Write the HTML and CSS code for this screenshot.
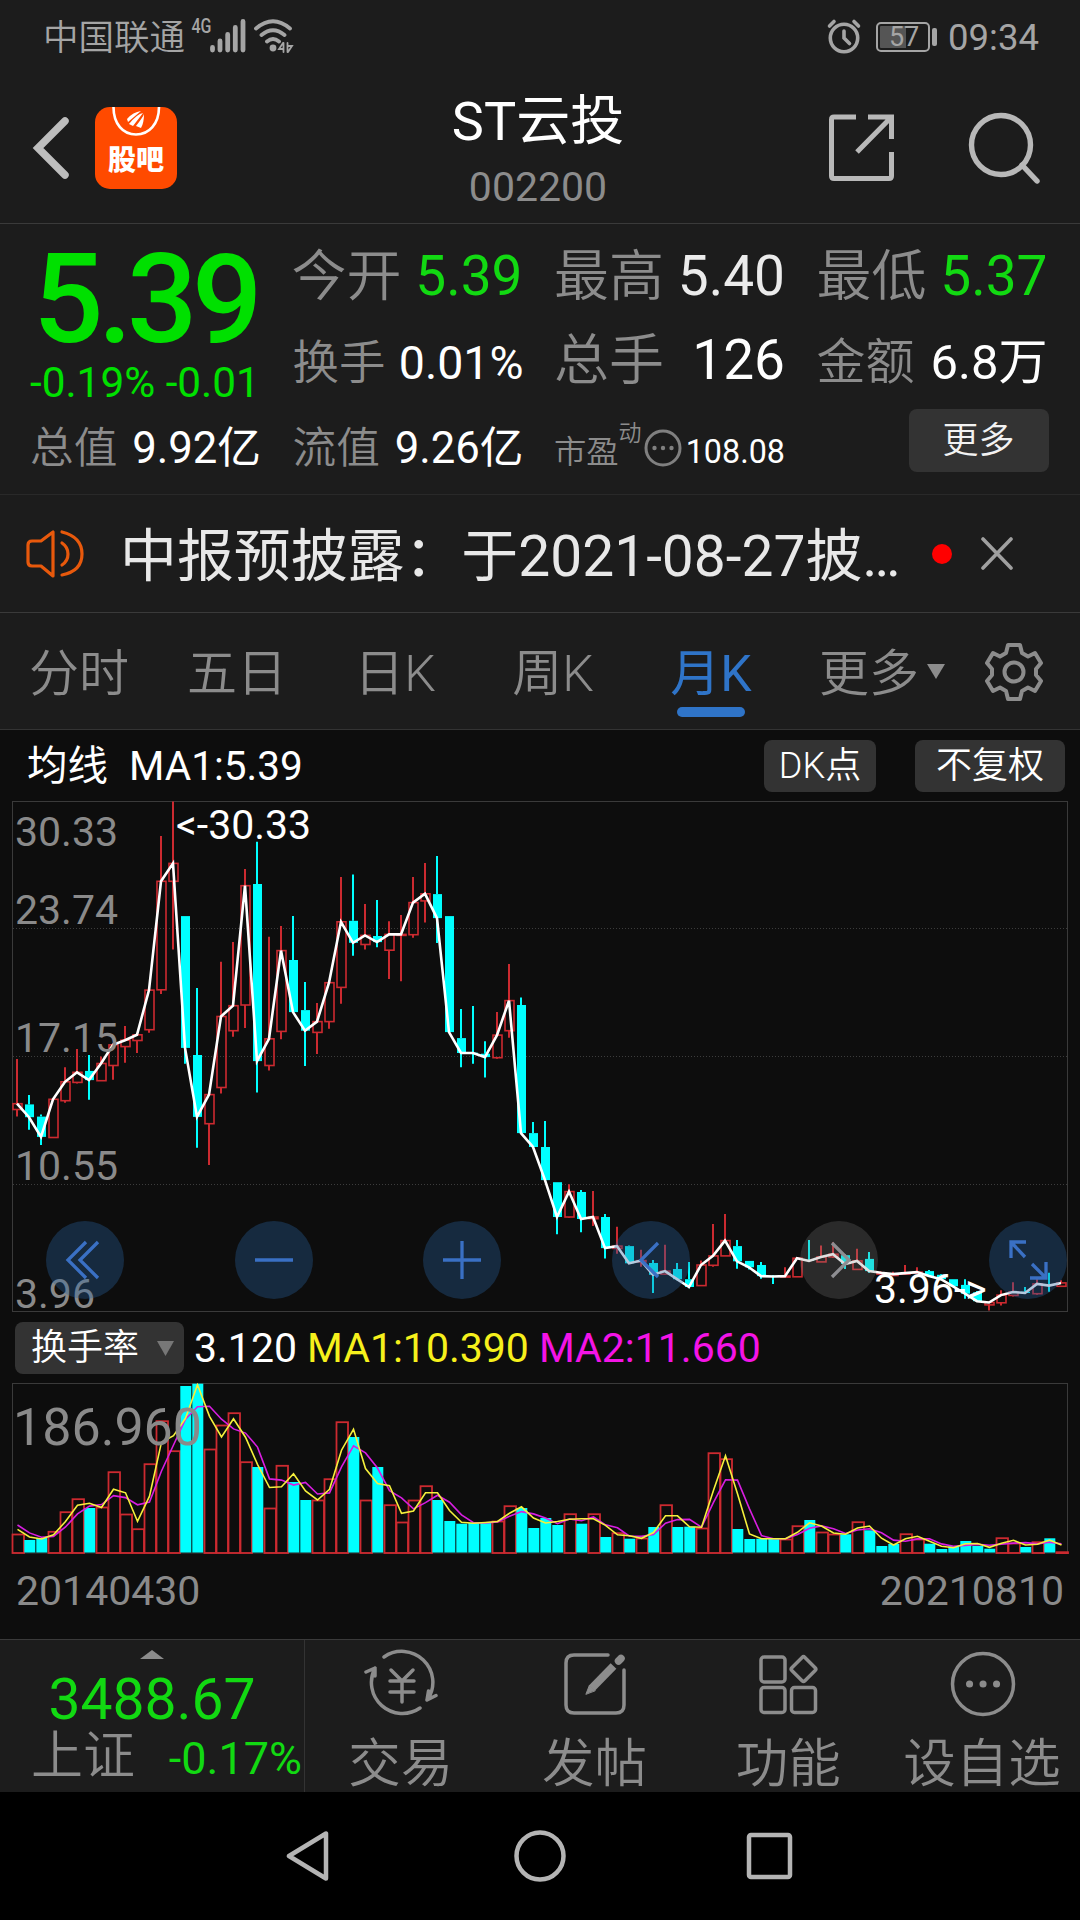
FILE: index.html
```html
<!DOCTYPE html>
<html lang="zh-CN">
<head>
    <meta charset="UTF-8">
    <meta name="viewport" content="width=device-width, initial-scale=1.0">
    <title>ST云投 002200</title>
    <link rel="stylesheet" href="styles.css">
</head>
<body>
    <div class="status-bar">
        <span class="carrier">中国联通</span>
        <span class="net">4G</span>
        <svg class="signal" width="36" height="34" viewBox="0 0 36 34" stroke="#a5a5a5" stroke-width="4.8" stroke-linecap="round">
            <path d="M2.5 28.500V31M10 22V31M17.700 15.500V31M25.300 8.500V31M33 2.500V31"/>
        </svg>
        <svg class="wifi" width="42" height="36" viewBox="0 0 42 36" fill="none" stroke="#a5a5a5" stroke-width="3.800" stroke-linecap="round">
            <path d="M3 10.500Q20 -4 37 10.500M8.500 17Q20 7.500 31.500 17M14 23.500Q20 18.500 26 23.500"/>
            <circle cx="20" cy="30" r="3.400" fill="#a5a5a5" stroke="none"/>
            <path d="M30.500 25V34M30 25L26 31H30M34.500 34V25M35 34L39 28H35" stroke-width="1.800"/>
        </svg>
        <svg class="alarm" width="36" height="36" viewBox="0 0 36 36" fill="none" stroke="#a5a5a5" stroke-width="3.600" stroke-linecap="round">
            <circle cx="18" cy="20" r="13.700"/>
            <path d="M18 13V20L23.500 25.500M3.500 8L8 3.500M28 3.500L32.500 8"/>
        </svg>
        <div class="battery"><span>57</span></div>
        <span class="clock">09:34</span>
    </div>

    <div class="header">
        <svg class="back" width="40" height="66" viewBox="0 0 40 66" fill="none" stroke="#bdbdbd" stroke-width="7.500" stroke-linecap="round">
            <path d="M34 6L7 33L34 60"/>
        </svg>
        <div class="guba">
            <svg width="82" height="34" viewBox="0 0 82 34" fill="none" stroke="#fff" stroke-width="2.600">
                <path d="M18.500 0C18.500 17 28 27.500 41 27.500S64 17 64 0"/>
                <path d="M32 12Q38 5 46 4L33 15ZM34 17Q42 7 48 6L38 19ZM41 19Q48 10 49 7Q49 16 46 21Z" fill="#fff" stroke="none"/>
            </svg>
            <span>股吧</span>
        </div>
        <div class="title">
            <h1>ST云投</h1>
            <p>002200</p>
        </div>
        <svg class="share" width="68" height="70" viewBox="0 0 68 70" fill="none" stroke="#b8b8b8" stroke-width="5">
            <path d="M28 4H6Q3.500 4 3.500 6.500V63Q3.500 65.500 6 65.500H61Q63.500 65.500 63.500 63V39"/>
            <path d="M40 4H63.500V26M63 4.500L29 39"/>
        </svg>
        <svg class="search" width="74" height="74" viewBox="0 0 74 74" fill="none" stroke="#b8b8b8" stroke-width="5.400" stroke-linecap="round">
            <circle cx="33" cy="33" r="29.500"/>
            <path d="M54 53L69 69"/>
        </svg>
    </div>

    <div class="quote">
        <div class="price">
            <div class="now">5.39</div>
            <div class="change">-0.19% -0.01</div>
        </div>
        <div class="stat s54"><span>今开</span><b class="green">5.39</b></div>
        <div class="stat s54"><span>最高</span><b class="soft">5.40</b></div>
        <div class="stat s54"><span>最低</span><b class="green">5.37</b></div>
        <div class="stat s46"><span>换手</span><b>0.01%</b></div>
        <div class="stat s54"><span>总手</span><b>126</b></div>
        <div class="stat s48"><span>金额</span><b>6.8万</b></div>
        <div class="stat s43"><span>总值</span><b>9.92亿</b></div>
        <div class="stat s43"><span>流值</span><b>9.26亿</b></div>
        <div class="stat s32">
            <span>市盈</span><i>动</i>
            <svg width="38" height="38" viewBox="0 0 38 38" fill="#808080">
                <circle cx="19" cy="19" r="17" fill="none" stroke="#808080" stroke-width="3"/>
                <circle cx="10.500" cy="19" r="2.200"/><circle cx="19" cy="19" r="2.200"/><circle cx="27.500" cy="19" r="2.200"/>
            </svg>
            <b>108.08</b>
        </div>
        <button class="more">更多</button>
    </div>

    <div class="news">
        <svg width="60" height="50" viewBox="0 0 60 50" fill="none" stroke="#e8590c" stroke-width="3.200" stroke-linejoin="round" stroke-linecap="round">
            <path d="M27 3V47L15 37H6Q2 37 2 33V16Q2 12 6 12H15Z"/>
            <path d="M36 14Q42 18 42 25T36 36M36 3Q56 8 56 25T36 46"/>
        </svg>
        <span class="news-text">中报预披露：于2021-08-27披…</span>
        <span class="dot"></span>
        <svg width="34" height="34" viewBox="0 0 34 34" stroke="#a0a0a0" stroke-width="3.600" stroke-linecap="round">
            <path d="M3 2L31 31M31 2L3 31"/>
        </svg>
    </div>

    <div class="tabs">
        <a>分时</a>
        <a>五日</a>
        <a>日K</a>
        <a>周K</a>
        <a class="active">月K</a>
        <a class="tab-more">更多<svg width="18" height="15" viewBox="0 0 18 15"><path d="M0 0H18L9 15Z" fill="#8c8c8c"/></svg></a>
        <svg class="gear" width="60" height="60" viewBox="0 0 60 60" fill="none" stroke="#8c8c8c" stroke-width="4" stroke-linejoin="round">
            <path d="M24 3H36L38 11L44 14.500L51 11L57 21L52 27V33L57 39L51 49L44 45.500L38 49L36 57H24L22 49L16 45.500L9 49L3 39L8 33V27L3 21L9 11L16 14.500L22 11Z"/>
            <circle cx="30" cy="30" r="9.500"/>
        </svg>
    </div>

    <div class="chart-head">
        <span class="ma">均线</span>
        <span class="ma-value">MA1:5.39</span>
        <button>DK点</button>
        <button class="adjust">不复权</button>
    </div>

    <div class="k-chart">
        <svg id="kline" width="1080" height="511"></svg>
        <span class="axis a1">30.33</span>
        <span class="axis a2">23.74</span>
        <span class="axis a3">17.15</span>
        <span class="axis a4">10.55</span>
        <span class="axis a5">3.96</span>
        <span class="axis high">&lt;-30.33</span>
        <span class="axis low">3.96-&gt;</span>
        <div class="tools">
            <div class="tool"><svg width="78" height="78"><path d="M40 21L22 39L40 57M52 21L34 39L52 57"/></svg></div>
            <div class="tool"><svg width="78" height="78"><path d="M20 39H58"/></svg></div>
            <div class="tool"><svg width="78" height="78"><path d="M20 39H58M39 20V58"/></svg></div>
            <div class="tool"><svg width="78" height="78"><path d="M46 22L29 39L46 56"/></svg></div>
            <div class="tool gray"><svg width="78" height="78"><path d="M32 22L49 39L32 56"/></svg></div>
            <div class="tool"><svg width="78" height="78"><path d="M37 21H22V37M22 21L36 36M57 41V57H41M57 57L43 43"/></svg></div>
        </div>
    </div>

    <div class="vol-head">
        <button>换手率<svg width="17" height="15" viewBox="0 0 17 15"><path d="M0 0H17L8.500 15Z" fill="#777"/></svg></button>
        <span>3.120</span>
        <span class="yellow">MA1:10.390</span>
        <span class="pink">MA2:11.660</span>
    </div>
    <div class="vol-chart">
        <svg id="volume" width="1080" height="171"></svg>
        <span class="vol-max">186.960</span>
    </div>
    <div class="dates">
        <span>20140430</span>
        <span>20210810</span>
    </div>

    <div class="bottom">
        <div class="index">
            <svg width="24" height="9" viewBox="0 0 24 9"><path d="M0 9L12 0L24 9Z" fill="#8c8c8c"/></svg>
            <div class="index-value">3488.67</div>
            <div class="index-row"><span>上证</span><b>-0.17%</b></div>
        </div>
        <div class="item">
            <svg width="76" height="70" viewBox="0 0 76 70">
                <path d="M20 8A31 31 0 0 1 64 50L63 51L72 46.500M63 51L64.500 42M56 59A31 31 0 0 1 11 19L2 23M11 19V27"/>
                <path d="M27 21L38 32L49 21M26 32H50M26 43H50M38 32V53"/>
            </svg>
            <span>交易</span>
        </div>
        <div class="item">
            <svg width="70" height="70" viewBox="0 0 70 70">
                <path d="M47 6H13Q5 6 5 14V56Q5 64 13 64H55Q63 64 63 56V21"/>
                <path d="M31 39L52.500 17" stroke-width="8" stroke-linecap="butt"/>
                <path d="M25 45L28.500 36L34 41.500Z" fill="#8c8c8c" stroke-width="1"/>
                <path d="M57.500 12L60 9.500" stroke-width="7.500"/>
            </svg>
            <span>发帖</span>
        </div>
        <div class="item">
            <svg width="70" height="70" viewBox="0 0 70 70">
                <rect x="7" y="8" width="24" height="25" rx="3"/>
                <rect x="7" y="38.500" width="24" height="25" rx="3"/>
                <rect x="37.500" y="38.500" width="24" height="25" rx="3"/>
                <rect x="40.300" y="10.800" width="18.500" height="18.500" rx="2" transform="rotate(45 49.500 20)"/>
            </svg>
            <span>功能</span>
        </div>
        <div class="item">
            <svg width="70" height="70" viewBox="0 0 70 70">
                <circle cx="35" cy="35" r="30.500"/>
                <path d="M21.500 35H21.600M35 35H35.100M48.500 35H48.600" stroke-width="7"/>
            </svg>
            <span>设自选</span>
        </div>
    </div>

    <div class="nav-bar">
        <svg width="46" height="54" viewBox="0 0 46 54"><path d="M40 4.500V49.500L3 27Z"/></svg>
        <svg width="54" height="54" viewBox="0 0 54 54"><circle cx="28" cy="27" r="23.500"/></svg>
        <svg width="48" height="48" viewBox="0 0 48 48"><rect x="3" y="3" width="41" height="42" rx="2"/></svg>
    </div>

    <script src="chart.js"></script>
</body>
</html>
```
FILE: styles.css
```css
* {
    box-sizing: border-box;
}
body {
    margin: 0;
    width: 1080px;
    height: 1920px;
    overflow: hidden;
    background: #1c1c1c;
    color: #fff;
    font-family: Roboto, "Noto Sans CJK SC", sans-serif;
}
svg {
    display: block;
    flex: none;
}
b, i {
    font-weight: 400;
    font-style: normal;
}
button {
    border: none;
    padding: 0;
    border-radius: 8px;
    background: #333;
    color: #f2f2f2;
    font: 350 36px/52px Roboto, "Noto Sans CJK SC", sans-serif;
}
/* status bar */
.status-bar {
    height: 72px;
    display: flex;
    align-items: center;
    padding: 0 41px 0 43px;
    color: #a5a5a5;
}
.carrier {
    font-size: 35.500px;
    font-weight: 350;
    line-height: 72px;
    padding-top: 3px;
}
.net {
    font-size: 20px;
    font-weight: 500;
    line-height: 20px;
    margin: -20px -4px 0 4px;
    transform: scaleX(0.800);
}
.wifi {
    margin-left: 7px;
}
.alarm {
    margin-left: auto;
}
.battery {
    position: relative;
    width: 54px;
    height: 30px;
    margin: 2px 18px 0 14px;
    border: 2px solid #a5a5a5;
    border-radius: 5px;
    background: linear-gradient(90deg, #555 57%, #1c1c1c 57%);
    background-clip: content-box;
    padding: 2px;
}
.battery span {
    display: block;
    text-align: center;
    font-size: 27px;
    line-height: 23px;
    margin-left: 2px;
}
.battery::after {
    content: "";
    position: absolute;
    right: -9px;
    top: 4px;
    width: 5px;
    height: 18px;
    border-radius: 2px;
    background: #a5a5a5;
}
.clock {
    font-size: 36.500px;
    padding-top: 3px;
}
/* header */
.header {
    height: 152px;
    display: flex;
    align-items: flex-start;
    padding: 0 38px 0 31px;
    border-bottom: 1px solid #3a3a3a;
}
.back {
    margin-top: 43px;
}
.guba {
    width: 82px;
    height: 82px;
    margin: 35px 0 0 24px;
    border-radius: 15px;
    background: #ff4a00;
    text-align: center;
}
.guba span {
    display: block;
    font-size: 28px;
    font-weight: 900;
    line-height: 40px;
}
.title {
    flex: 1;
    margin-left: 71px;
    text-align: center;
}
.title h1 {
    margin: 12px 0 0;
    font-size: 54px;
    font-weight: 400;
    line-height: 76px;
}
.title p {
    margin: 0;
    font-size: 41px;
    line-height: 54px;
    color: #8c8c8c;
}
.share {
    margin: 41px 72px 0 0;
}
.search {
    margin-top: 40px;
}
/* quote */
.quote {
    height: 271px;
    display: grid;
    grid-template-columns: repeat(4, 230px);
    grid-template-rows: 84px 84px 84px;
    column-gap: 32.500px;
    align-items: baseline;
    padding: 10px 0 0 30px;
    border-bottom: 1px solid #292929;
}
.price {
    grid-row: 1 / 3;
    align-self: start;
    color: #00e000;
    white-space: nowrap;
}
.now {
    margin-left: 3px;
    font-size: 124px;
    font-weight: 500;
    line-height: 132px;
    letter-spacing: -5.500px;
}
.change {
    margin-top: -8px;
    font-size: 42.300px;
    line-height: 50px;
}
.stat {
    display: flex;
    justify-content: space-between;
    align-items: baseline;
    line-height: 84px;
    white-space: nowrap;
}
.stat span, .stat i {
    color: #8c8c8c;
    font-weight: 350;
}
.stat .green {
    color: #12d912;
}
.stat .soft {
    color: #ebebeb;
}
.s54 {
    font-size: 55px;
    margin-left: -1px;
}
.s46 {
    font-size: 46.500px;
    margin-right: -1px;
}
.s48 {
    font-size: 49px;
    margin-left: -1px;
}
.s43 {
    font-size: 43.700px;
    padding-top: 4px;
    margin-right: -1px;
}
.s32 {
    font-size: 32.300px;
    margin-left: -1px;
    justify-content: flex-start;
}
.s32 i {
    font-size: 23px;
    position: relative;
    top: -22px;
}
.s32 svg {
    align-self: center;
    margin: 0 0 12px 2px;
}
.s32 b {
    margin-left: auto;
}
.quote .more {
    width: 140px;
    height: 63px;
    margin: 7px -1px 0 0;
    justify-self: end;
    align-self: start;
    line-height: 62px;
    font-size: 36px;
}
/* news */
.news {
    height: 118px;
    display: flex;
    align-items: center;
    padding-left: 26px;
    border-bottom: 1px solid #3a3a3a;
}
.news-text {
    width: 780px;
    margin-left: 34px;
    padding-top: 7px;
    font-size: 56.900px;
    font-weight: 400;
    line-height: 110px;
    color: #e8e8e8;
    white-space: nowrap;
}
.dot {
    width: 20px;
    height: 20px;
    margin: 0 28px 0 32px;
    border-radius: 50%;
    background: #f00;
}
/* tabs */
.tabs {
    height: 117px;
    display: flex;
    align-items: center;
    border-bottom: 1px solid #333;
    color: #8c8c8c;
}
.tabs a {
    position: relative;
    width: 158px;
    padding-top: 6px;
    text-align: center;
    font-size: 50px;
    font-weight: 350;
    line-height: 110px;
}
.tabs .active {
    color: #2f74c8;
    font-weight: 400;
}
.tabs .active::after {
    content: "";
    position: absolute;
    left: 45px;
    bottom: 12px;
    width: 68px;
    height: 10px;
    border-radius: 5px;
    background: #2f74c8;
}
.tabs .tab-more {
    display: flex;
    align-items: center;
    gap: 8px;
    padding-left: 29px;
}
.tab-more svg {
    margin-top: -6px;
}
.gear {
    margin: 1px 0 0 36px;
}
/* k chart */
.chart-head, .k-chart, .vol-head, .vol-chart, .dates {
    background: #0d0d0d;
}
.chart-head {
    height: 71px;
    display: flex;
    align-items: center;
    padding: 0 15px 0 27px;
    font-size: 40.500px;
    line-height: 69px;
}
.ma, .ma-value {
    padding-top: 2px;
}
.ma-value {
    margin: 0 auto 0 21px;
}
.chart-head button {
    width: 112px;
    height: 52px;
    color: #fff;
}
.chart-head .adjust {
    width: 150px;
    margin-left: 39px;
}
.k-chart {
    position: relative;
    height: 511px;
}
.axis {
    position: absolute;
    left: 15px;
    font-size: 41px;
    line-height: 48px;
    color: #8a8a8a;
}
.a1 { top: 7px; }
.a2 { top: 85px; }
.a3 { top: 213px; }
.a4 { top: 341px; }
.a5 { top: 469px; }
.high {
    left: 176px;
    top: 0;
    color: #fff;
}
.low {
    left: 874px;
    top: 464px;
    color: #fff;
}
.tools {
    position: absolute;
    left: 46px;
    right: 13px;
    top: 420px;
    display: flex;
    justify-content: space-between;
}
.tool {
    width: 78px;
    height: 78px;
    border-radius: 50%;
    background: rgba(41, 96, 159, 0.350);
    stroke: #3a70c4;
    stroke-width: 3.300;
    fill: none;
}
.tool.gray {
    background: rgba(130, 130, 130, 0.250);
    stroke: #8e8e92;
}
/* volume */
.vol-head {
    height: 71px;
    display: flex;
    align-items: center;
    gap: 10px;
    padding: 1px 0 0 15px;
    font-size: 41px;
    line-height: 70px;
}
.vol-head button {
    width: 169px;
    height: 52px;
    display: flex;
    align-items: center;
    justify-content: space-between;
    padding: 0 10px 0 16px;
    color: #fff;
}
.yellow {
    color: #f6f01c;
}
.pink {
    color: #f414e6;
}
.vol-chart {
    position: relative;
}
.vol-max {
    position: absolute;
    left: 13px;
    top: 15px;
    font-size: 52px;
    line-height: 60px;
    color: #8a8a8a;
}
.dates {
    height: 85px;
    display: flex;
    justify-content: space-between;
    padding: 0 16px;
    font-size: 41px;
    line-height: 75px;
    color: #8a8a8a;
}
/* bottom bar */
.bottom {
    height: 153px;
    display: flex;
    border-top: 1px solid #3a3a3a;
    color: #8c8c8c;
}
.index {
    width: 305px;
    border-right: 1px solid #333;
    display: flex;
    flex-direction: column;
    align-items: center;
    padding-top: 10px;
    color: #12d912;
}
.index-value {
    font-size: 57px;
    line-height: 64px;
    margin-top: 9px;
}
.index-row {
    align-self: stretch;
    display: flex;
    align-items: baseline;
    justify-content: space-between;
    padding: 0 2px 0 31px;
    font-size: 45px;
    line-height: 50px;
}
.index-row span {
    color: #8c8c8c;
    font-size: 52px;
    font-weight: 350;
}
.item {
    flex: 1;
    display: flex;
    flex-direction: column;
    align-items: center;
    padding-top: 9px;
    font-size: 52.500px;
    font-weight: 350;
    fill: none;
    stroke: #8c8c8c;
    stroke-width: 3.500;
    stroke-linecap: round;
    stroke-linejoin: round;
}
.item span {
    stroke: none;
    margin: 15px 2px 0 0;
    line-height: 60px;
    white-space: nowrap;
}
.nav-bar {
    height: 128px;
    display: flex;
    align-items: center;
    justify-content: center;
    gap: 180px;
    background: #000;
    fill: none;
    stroke: #b4b4b4;
    stroke-width: 4.500;
    stroke-linejoin: round;
}
```
FILE: chart.js
```js
// one row per month: up/down, high, body top, body bottom, low
const candles = [
    ['u',796,928,945,966],['d',902,930,968,1005],['d',960,966,1026,1050],['u',915,915,1028,1028],
    ['u',820,863,919,925],['u',766,835,865,868],['d',784,831,858,916],['u',788,809,860,860],
    ['u',750,754,815,857],['u',698,740,759,807],['u',720,724,741,778],['u',588,592,709,718],
    ['u',136,270,591,603],['u',34,217,270,472],['d',373,373,763,810],['d',586,784,967,1058],
    ['u',900,901,987,1109],['u',508,670,880,898],['u',450,638,712,730],['u',234,283,636,704],
    ['d',153,278,802,895],['u',434,736,815,830],['u',402,475,714,737],['d',373,503,657,657],
    ['d',568,651,712,816],['u',630,685,717,781],['u',569,570,685,706],['u',257,390,584,632],
    ['d',250,387,452,490],['u',337,430,457,472],['d',325,432,450,465],['u',388,427,474,559],
    ['u',370,427,428,566],['u',257,333,428,437],['u',216,307,328,392],['d',195,308,379,453],
    ['d',373,373,716,716],['d',648,734,778,820],['d',639,777,778,810],['d',743,780,790,850],
    ['u',657,725,792,795],['u',515,623,712,733],['d',614,636,1015,1015],['d',982,1015,1056,1056],
    ['d',979,1056,1154,1154],['d',1160,1160,1263,1314],['u',1166,1188,1263,1265],['d',1183,1189,1269,1308],
    ['u',1186,1263,1268,1290],['d',1254,1263,1355,1386],['u',1292,1349,1356,1372],['d',1347,1349,1400,1400],
    ['u',1360,1392,1396,1410],['d',1390,1399,1434,1488],['u',1345,1423,1432,1435],['d',1399,1417,1447,1450],
    ['d',1396,1447,1470,1474],['u',1392,1405,1466,1466],['u',1284,1378,1406,1410],['u',1254,1333,1378,1378],
    ['d',1331,1349,1394,1416],['d',1393,1393,1412,1418],['d',1396,1405,1438,1446],['d',1435,1437,1439,1461],
    ['u',1412,1438,1440,1440],['u',1382,1385,1440,1440],['d',1331,1390,1393,1396],['u',1347,1381,1396,1396],
    ['u',1338,1373,1381,1384],['d',1373,1376,1402,1417],['u',1357,1393,1418,1418],['d',1367,1387,1423,1428],
    ['u',1424,1428,1432,1432],['u',1425,1432,1436,1437],['u',1405,1429,1432,1435],['u',1412,1426,1429,1430],
    ['d',1420,1423,1438,1438],['d',1432,1434,1447,1450],['d',1447,1447,1468,1468],['d',1447,1464,1490,1505],
    ['d',1482,1486,1512,1514],['u',1514,1516,1523,1540],['u',1480,1494,1517,1525],['u',1456,1485,1495,1498],
    ['d',1470,1484,1488,1490],['u',1443,1461,1490,1493],['d',1428,1462,1466,1484],['u',1450,1458,1468,1470]
];

// top of each turnover bar
const tops = [
    672,690,684,664,605,566,594,591,485,612,656,461,332,422,228,221,417,345,308,455,471,594,
    466,516,570,570,506,335,381,570,471,584,636,570,527,570,633,641,639,636,633,587,594,654,
    624,645,611,641,611,681,668,686,684,651,584,651,650,654,428,446,657,687,686,686,687,647,
    630,666,672,673,635,661,708,702,671,687,701,717,709,693,708,716,683,699,711,695,685,725
];
const downBars = [1,2,6,14,15,20,23,24,28,30,35,36,37,38,39,42,43,44,45,47,49,51,53,55,56,
    60,61,62,63,66,69,71,72,73,76,77,78,79,80,81,84,86];

const RED = '#cc2a30';
const CYAN = '#00ffff';
const STEP = 12;

function rect(x, y, w, h, attrs) {
    return `<rect x="${x}" y="${y}" width="${w}" height="${Math.max(h, 1)}" ${attrs}/>`;
}

function drawKline() {
    const y = v => Math.round((v / 2.958 - 11) * 10) / 10;
    let out = rect(12.5, 0.5, 1055, 510, 'fill="none" stroke="#3a3a3a"');
    [127.5, 255.5, 383.5].forEach(g => {
        out += `<path d="M13 ${g}H1067" stroke="#3c3c3c" stroke-dasharray="1 2"/>`;
    });
    let line = [];
    candles.forEach(([dir, high, top, bottom, low], i) => {
        const x = 17 + i * STEP;
        const color = dir === 'u' ? RED : CYAN;
        out += `<path d="M${x} ${y(high)}V${y(top)}M${x} ${y(bottom)}V${y(low)}" stroke="${color}" stroke-width="2"/>`;
        if (dir === 'u') {
            out += rect(x - 4, y(top), 9, y(bottom) - y(top), `fill="none" stroke="${RED}" stroke-width="1.6"`);
        } else {
            out += rect(x - 4, y(top), 9, y(bottom) - y(top), `fill="${CYAN}"`);
        }
        line.push(x + ',' + y(dir === 'u' ? top : bottom));
    });
    out += `<polyline points="${line.join(' ')}" fill="none" stroke="#fff" stroke-width="2.6"/>`;
    document.getElementById('kline').innerHTML = out;
}

function drawVolume() {
    const y = v => Math.round((v / 3 - 73) * 10) / 10;
    const base = 169.5;
    let out = rect(12.5, 0.5, 1055, 169.5, 'fill="none" stroke="#3a3a3a"');
    tops.forEach((v, i) => {
        const x = 12 + i * STEP;
        if (downBars.includes(i)) {
            out += rect(x + 0.3, y(v), 11, base - y(v), `fill="${CYAN}"`);
        } else {
            out += rect(x + 0.5, y(v) + 0.5, 11.5, base - y(v), `fill="none" stroke="${RED}" stroke-width="1.8"`);
        }
    });
    // two months before the visible range, for the averages
    const all = [619, 644].concat(tops);
    const average = n => tops.map((v, i) => {
        const part = all.slice(i + 3 - n, i + 3);
        return (17.5 + i * STEP) + ',' + y(part.reduce((a, b) => a + b) / n);
    }).join(' ');
    out += `<polyline points="${average(3)}" fill="none" stroke="#d81ee0" stroke-width="1.6"/>`;
    out += `<polyline points="${average(2)}" fill="none" stroke="#f5f03c" stroke-width="1.6"/>`;
    document.getElementById('volume').innerHTML = out;
}

drawKline();
drawVolume();
```
